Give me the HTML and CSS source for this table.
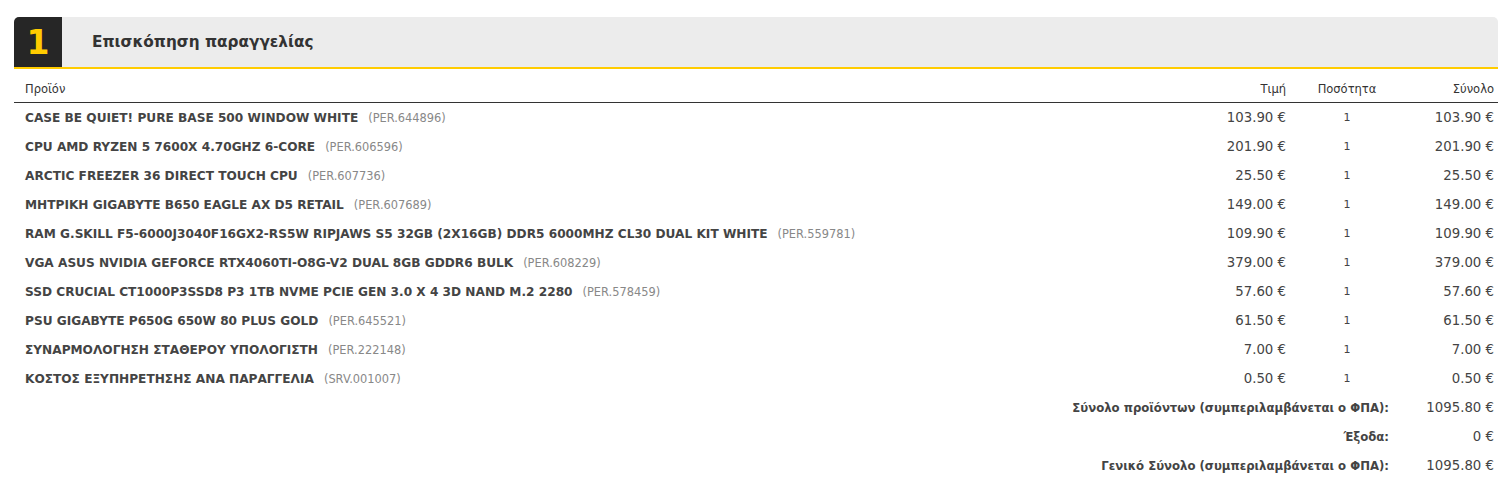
FILE: index.html
```html
<!DOCTYPE html>
<html lang="el">
<head>
<meta charset="utf-8">
<title>Επισκόπηση παραγγελίας</title>
<link rel="stylesheet" href="styles.css">
</head>
<body>
<div class="page">
  <section class="step">
    <header class="step-head">
      <div class="step-num">1</div>
      <h2 class="step-title">Επισκόπηση παραγγελίας</h2>
    </header>
    <table class="order">
      <colgroup>
        <col class="c-prod"><col class="c-price"><col class="c-qty"><col class="c-total">
      </colgroup>
      <thead>
        <tr><th class="l">Προϊόν</th><th class="r">Τιμή</th><th class="c">Ποσότητα</th><th class="r">Σύνολο</th></tr>
      </thead>
      <tbody>
        <tr><td class="prod"><b>CASE BE QUIET! PURE BASE 500 WINDOW WHITE</b><span class="code">(PER.644896)</span></td><td class="money">103.90 €</td><td class="qty">1</td><td class="money">103.90 €</td></tr>
        <tr><td class="prod"><b>CPU AMD RYZEN 5 7600X 4.70GHZ 6-CORE</b><span class="code">(PER.606596)</span></td><td class="money">201.90 €</td><td class="qty">1</td><td class="money">201.90 €</td></tr>
        <tr><td class="prod"><b>ARCTIC FREEZER 36 DIRECT TOUCH CPU</b><span class="code">(PER.607736)</span></td><td class="money">25.50 €</td><td class="qty">1</td><td class="money">25.50 €</td></tr>
        <tr><td class="prod"><b>ΜΗΤΡΙΚΗ GIGABYTE B650 EAGLE AX D5 RETAIL</b><span class="code">(PER.607689)</span></td><td class="money">149.00 €</td><td class="qty">1</td><td class="money">149.00 €</td></tr>
        <tr><td class="prod"><b>RAM G.SKILL F5-6000J3040F16GX2-RS5W RIPJAWS S5 32GB (2X16GB) DDR5 6000MHZ CL30 DUAL KIT WHITE</b><span class="code">(PER.559781)</span></td><td class="money">109.90 €</td><td class="qty">1</td><td class="money">109.90 €</td></tr>
        <tr><td class="prod"><b>VGA ASUS NVIDIA GEFORCE RTX4060TI-O8G-V2 DUAL 8GB GDDR6 BULK</b><span class="code">(PER.608229)</span></td><td class="money">379.00 €</td><td class="qty">1</td><td class="money">379.00 €</td></tr>
        <tr><td class="prod"><b>SSD CRUCIAL CT1000P3SSD8 P3 1TB NVME PCIE GEN 3.0 X 4 3D NAND M.2 2280</b><span class="code">(PER.578459)</span></td><td class="money">57.60 €</td><td class="qty">1</td><td class="money">57.60 €</td></tr>
        <tr><td class="prod"><b>PSU GIGABYTE P650G 650W 80 PLUS GOLD</b><span class="code">(PER.645521)</span></td><td class="money">61.50 €</td><td class="qty">1</td><td class="money">61.50 €</td></tr>
        <tr><td class="prod"><b>ΣΥΝΑΡΜΟΛΟΓΗΣΗ ΣΤΑΘΕΡΟΥ ΥΠΟΛΟΓΙΣΤΗ</b><span class="code">(PER.222148)</span></td><td class="money">7.00 €</td><td class="qty">1</td><td class="money">7.00 €</td></tr>
        <tr><td class="prod"><b>ΚΟΣΤΟΣ ΕΞΥΠΗΡΕΤΗΣΗΣ ΑΝΑ ΠΑΡΑΓΓΕΛΙΑ</b><span class="code">(SRV.001007)</span></td><td class="money">0.50 €</td><td class="qty">1</td><td class="money">0.50 €</td></tr>
      </tbody>
      <tfoot>
        <tr><td colspan="3" class="sum-label">Σύνολο προϊόντων (συμπεριλαμβάνεται ο ΦΠΑ):</td><td class="money">1095.80 €</td></tr>
        <tr><td colspan="3" class="sum-label">Έξοδα:</td><td class="money">0 €</td></tr>
        <tr><td colspan="3" class="sum-label">Γενικό Σύνολο (συμπεριλαμβάνεται ο ΦΠΑ):</td><td class="money">1095.80 €</td></tr>
      </tfoot>
    </table>
  </section>
</div>
</body>
</html>
```
FILE: styles.css
```css
html, body {
  margin: 0;
  padding: 0;
  background: #fff;
}
body {
  font-family: "DejaVu Sans", Verdana, sans-serif;
  color: #444;
}
.page {
  padding: 17px 12px 0 14px;
}
.step-head {
  display: flex;
  align-items: center;
  height: 50px;
  background: #ececec;
  border-radius: 5px 5px 0 0;
  border-bottom: 2px solid #ffcc00;
  overflow: hidden;
}
.step-num {
  width: 48px;
  height: 100%;
  background: #262626;
  color: #ffcc00;
  font-weight: bold;
  font-size: 33px;
  display: flex;
  align-items: center;
  justify-content: center;
}
.step-title {
  margin: 0 0 0 30px;
  font-size: 15.3px;
  font-weight: bold;
  color: #333;
}
.order {
  width: 100%;
  border-collapse: collapse;
  table-layout: fixed;
}
.c-price { width: 160px; }
.c-qty { width: 114px; }
.c-total { width: 94px; }
.order th {
  height: 27px;
  font-weight: normal;
  font-size: 11.5px;
  color: #333;
  border-bottom: 1px solid #333;
  padding: 6px 4px 0;
}
.order th.l { text-align: left; padding-left: 11px; }
.order th.r { text-align: right; }
.order th.c { text-align: center; }
.order td {
  height: 29px;
  padding: 0 4px;
  vertical-align: middle;
  white-space: nowrap;
}
.prod { padding-left: 11px !important; font-size: 12.15px; }
.prod b { color: #444; }
.code {
  margin-left: 10px;
  font-size: 11.4px;
  color: #888;
}
.money {
  text-align: right;
  font-size: 13.3px;
  color: #444;
}
.qty {
  text-align: center;
  font-size: 11px;
}
.sum-label {
  text-align: right;
  font-weight: bold;
  font-size: 11.7px;
  padding-right: 15px !important;
}
```
